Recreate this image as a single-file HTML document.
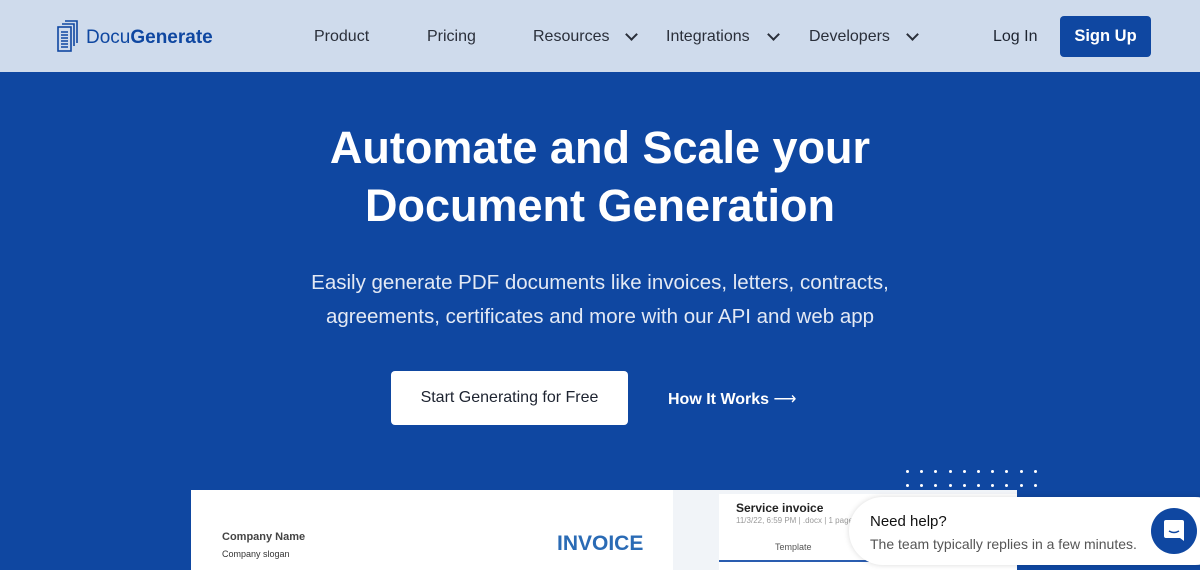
<!DOCTYPE html>
<html><head><style>
*{margin:0;padding:0;box-sizing:border-box}
body{width:1200px;height:570px;overflow:hidden;background:#0f47a1;font-family:"Liberation Sans",sans-serif;position:relative}
.hdr{position:absolute;left:0;top:0;width:1200px;height:72px;background:#cfdbec}
.nav{position:absolute;top:28px;font-size:16px;color:#2a2f3a}
.chev{position:absolute;top:30px;width:9px;height:9px;border-right:2px solid #2a2f3a;border-bottom:2px solid #2a2f3a;transform:rotate(45deg)}
h1{position:absolute;left:0;width:1200px;top:119px;text-align:center;color:#fff;font-size:45px;line-height:58px;font-weight:bold}
.sub{position:absolute;left:0;width:1200px;top:266px;text-align:center;color:#e3e9f4;font-size:20.5px;line-height:34px}
.btn{position:absolute;left:391px;top:371px;width:237px;height:54px;background:#fff;border-radius:4px;color:#1d2330;font-size:16px;text-align:center;line-height:54px}
.dot{position:absolute;width:3px;height:3px;background:#fff;border-radius:50%}
</style></head><body>
<div class="hdr">
<svg style="position:absolute;left:57px;top:20px" width="22" height="32" viewBox="0 0 22 32" fill="none" stroke="#0f47a1" stroke-width="1.6"><path d="M8 1h12v22"/><path d="M5 4h12v22"/><rect x="1" y="7" width="13" height="24" fill="#cfdbec"/><path d="M4 12h7M4 15h7M4 18h7M4 21h7M4 24h7M4 27h7"/></svg>
<div style="position:absolute;left:86px;top:27px;font-size:19px;color:#0f47a1">Docu<b>Generate</b></div>
<div class="nav" style="left:314px">Product</div>
<div class="nav" style="left:427px">Pricing</div>
<div class="nav" style="left:533px">Resources</div><div class="chev" style="left:627px"></div>
<div class="nav" style="left:666px">Integrations</div><div class="chev" style="left:769px"></div>
<div class="nav" style="left:809px">Developers</div><div class="chev" style="left:908px"></div>
<div class="nav" style="left:993px;color:#1d2330">Log In</div>
<div style="position:absolute;left:1060px;top:16px;width:91px;height:41px;background:#0f47a1;border-radius:4px;color:#fff;font-size:16.5px;font-weight:bold;text-align:center;line-height:41px">Sign Up</div>
</div>
<h1>Automate and Scale your<br>Document Generation</h1>
<div class="sub">Easily generate PDF documents like invoices, letters, contracts,<br>agreements, certificates and more with our API and web app</div>
<div class="btn">Start Generating for Free</div>
<div style="position:absolute;left:668px;top:389px;color:#fff;font-size:16px;font-weight:bold">How It Works <span style="font-weight:normal">⟶</span></div>
<div id="dots"></div>
<div style="position:absolute;left:191px;top:490px;width:826px;height:80px;background:#f1f4f8"></div>
<div style="position:absolute;left:191px;top:490px;width:482px;height:80px;background:#fff"></div>
<div style="position:absolute;left:222px;top:531px;font-size:11px;font-weight:bold;color:#444">Company Name</div>
<div style="position:absolute;left:222px;top:549px;font-size:9px;color:#333">Company slogan</div>
<div style="position:absolute;left:557px;top:532px;font-size:21px;font-weight:bold;color:#2a6bb5">INVOICE</div>
<div style="position:absolute;left:719px;top:494px;width:298px;height:76px;background:#fff"></div>
<div style="position:absolute;left:736px;top:501px;font-size:12px;font-weight:bold;color:#222">Service invoice</div>
<div style="position:absolute;left:736px;top:516px;font-size:8px;color:#999">11/3/22, 6:59 PM | .docx | 1 page</div>
<div style="position:absolute;left:775px;top:542px;font-size:9px;color:#555">Template</div>
<div style="position:absolute;left:719px;top:560px;width:150px;height:2px;background:#2a5db0"></div>
<div style="position:absolute;left:849px;top:497px;width:380px;height:68px;background:#fff;border-radius:34px;box-shadow:0 0 6px rgba(0,0,0,.15)"></div>
<div style="position:absolute;left:870px;top:513px;font-size:15px;color:#111">Need help?</div>
<div style="position:absolute;left:870px;top:536px;font-size:14px;color:#555">The team typically replies in a few minutes.</div>
<div style="position:absolute;left:1151px;top:508px;width:46px;height:46px;border-radius:50%;background:#0f47a1"></div>
<svg style="position:absolute;left:1163px;top:519px" width="22" height="24" viewBox="0 0 22 24"><path d="M3 1h16a2 2 0 0 1 2 2v19l-4-3H3a2 2 0 0 1-2-2V3a2 2 0 0 1 2-2z" fill="#fff"/><path d="M6 12q5 3 10 0" stroke="#0f47a1" stroke-width="1.5" fill="none"/></svg>
<script>
var d=document.getElementById('dots'),h='';
for(var r=0;r<2;r++)for(var i=0;i<10;i++)h+='<div class="dot" style="left:'+(906+i*14.2)+'px;top:'+(470+r*14)+'px"></div>';
d.innerHTML=h;
</script>
</body></html>
